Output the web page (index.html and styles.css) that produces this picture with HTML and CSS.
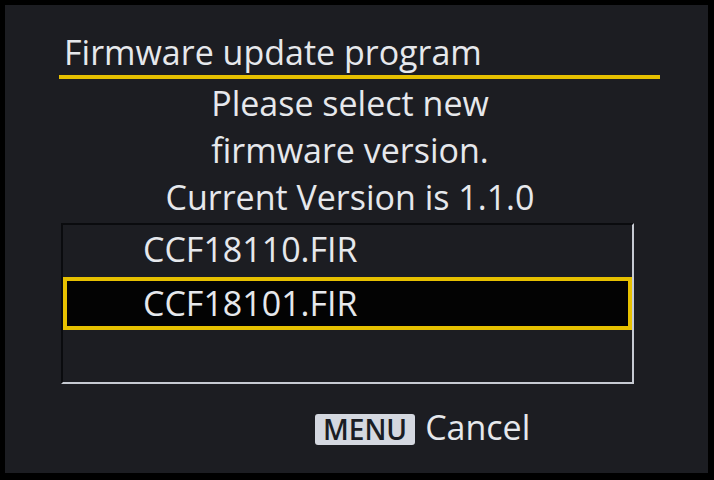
FILE: index.html
```html
<!DOCTYPE html>
<html>
<head>
<meta charset="utf-8">
<link rel="stylesheet" href="styles.css">
</head>
<body>
<div class="screen">
  <div class="title">Firmware update program</div>
  <div class="message">
    <div class="line">Please select new</div>
    <div class="line">firmware version.</div>
    <div class="line">Current Version is 1.1.0</div>
  </div>
  <div class="list">
    <div class="item">CCF18110.FIR</div>
    <div class="item selected">CCF18101.FIR</div>
    <div class="item"></div>
  </div>
  <div class="footer">
    <span class="badge">MENU</span>
    <span class="cancel">Cancel</span>
  </div>
</div>
</body>
</html>
```

FILE: styles.css
```css
html, body {
  margin: 0;
  padding: 0;
  background: #000;
}
body {
  width: 714px;
  height: 480px;
  overflow: hidden;
  font-family: "Open Sans", "Noto Sans", sans-serif;
  color: #e6e8ec;
}
.screen {
  margin: 5px 6px 7px 5px;
  height: 468px;
  background: #1c1d22;
  display: flex;
  flex-direction: column;
  box-sizing: border-box;
  padding-top: 24px;
}
.title {
  margin: 0 48px 0 54px;
  padding-left: 5px;
  font-size: 34px;
  line-height: 46px;
  height: 46px;
  white-space: nowrap;
  border-bottom: 4px solid #e6c000;
}
.message {
  display: flex;
  flex-direction: column;
  align-items: center;
  margin-top: 1px;
  padding-right: 13px;
  font-size: 34px;
  white-space: nowrap;
}
.line {
  height: 47px;
  line-height: 47px;
}
.list {
  margin: 2px 74px 0 56px;
  height: 161px;
  box-sizing: border-box;
  border-top: 2px solid #0a0b0e;
  border-left: 2px solid #0a0b0e;
  border-right: 2px solid #c6cad2;
  border-bottom: 2px solid #c6cad2;
  display: flex;
  flex-direction: column;
}
.item {
  height: 52px;
  flex: none;
  box-sizing: border-box;
  padding-left: 80px;
  font-size: 34px;
  line-height: 48px;
  white-space: nowrap;
}
.selected {
  height: 53px;
  background: #030303;
  border: 4px solid #e6c000;
  padding-left: 76px;
  line-height: 44px;
}
.footer {
  display: flex;
  align-items: baseline;
  margin-top: 25px;
  padding-left: 310px;
  gap: 10px;
}
.badge {
  background: #d4d8e0;
  color: #1a1d24;
  font-weight: 600;
  font-size: 28px;
  line-height: 31px;
  padding: 0 8px;
  border-radius: 3px;
}
.cancel {
  font-size: 34px;
  line-height: 36px;
}
```
